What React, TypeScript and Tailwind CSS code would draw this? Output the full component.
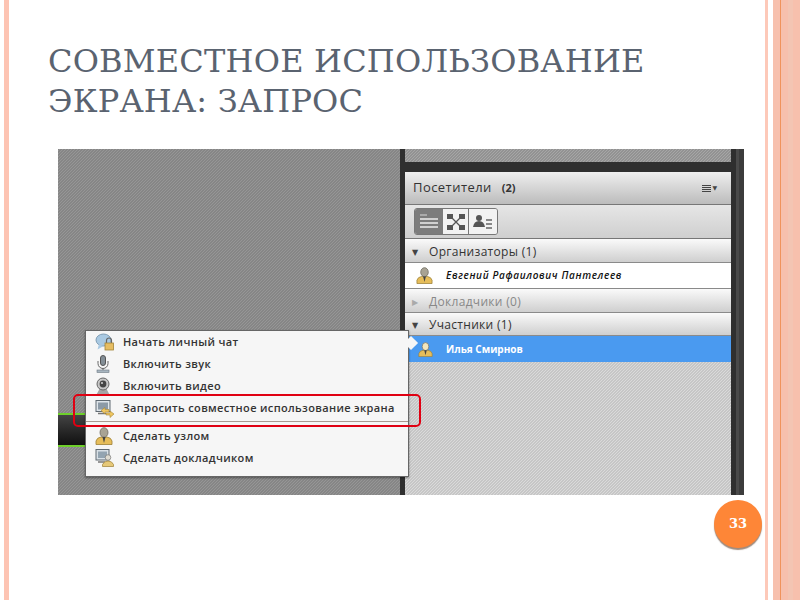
import { ReactNode } from "react";

const hatchDark =
  "bg-[repeating-linear-gradient(135deg,#868686_0px,#868686_0.8px,#969696_0.8px,#969696_2.121px)]";
const hatchTop =
  "bg-[repeating-linear-gradient(135deg,#929292_0px,#929292_0.8px,#a6a6a6_0.8px,#a6a6a6_2.121px)]";
const hatchLight =
  "bg-[repeating-linear-gradient(135deg,#c6c6c6_0px,#c6c6c6_0.8px,#dadada_0.8px,#dadada_2.121px)]";

function ChatIcon() {
  return (
    <svg width="20" height="18" viewBox="0 0 20 18">
      <ellipse cx="8.5" cy="7" rx="7.5" ry="6" fill="#a9c9e2" stroke="#7f9db5" />
      <path d="M4 11 L2.5 16.5 L8.5 13 Z" fill="#a9c9e2" />
      <path d="M11.5 10 V7.5 a2.5 2.5 0 0 1 5 0 V10" fill="none" stroke="#666" strokeWidth="1.2" />
      <rect x="10" y="10" width="8.5" height="7" fill="#e6bd62" stroke="#a38437" strokeWidth="0.8" />
    </svg>
  );
}

function MicIcon() {
  return (
    <svg width="16" height="18" viewBox="0 0 16 18">
      <rect x="5.5" y="0.5" width="5" height="10" rx="2.5" fill="#838e96" stroke="#555" />
      <path d="M3 6 V8.5 a5 5 0 0 0 10 0 V6" fill="none" stroke="#666" />
      <path d="M8 13.5 V15" stroke="#666" />
      <rect x="2" y="15" width="12" height="2.5" fill="#a8b6c0" stroke="#6b7780" strokeWidth="0.6" />
    </svg>
  );
}

function CamIcon() {
  return (
    <svg width="16" height="18" viewBox="0 0 16 18">
      <path d="M1.5 17.5 L5 11 H11 L14.5 17.5 Z" fill="#a5a5a5" />
      <circle cx="8" cy="7" r="6" fill="#c6c6c6" stroke="#666" />
      <circle cx="8" cy="7" r="3.4" fill="#444" />
      <circle cx="7" cy="6" r="1.1" fill="#ccc" />
    </svg>
  );
}

function ShareIcon() {
  return (
    <svg width="20" height="18" viewBox="0 0 20 18">
      <rect x="1" y="0.5" width="14" height="11" fill="#dfe5ea" stroke="#606a72" />
      <rect x="3" y="2.5" width="10" height="7" fill="#8c9aa6" />
      <path d="M3 13.5 H11" stroke="#777" strokeWidth="1.5" />
      <path d="M6 10.5 L10 7.5 V9.5 H14 V12 H10 V14 Z" fill="#efc660" stroke="#a58437" strokeWidth="0.6" />
      <path d="M19 14 L15 11 V13 H11 V15 H15 V17.5 Z" fill="#efc660" stroke="#a58437" strokeWidth="0.6" />
    </svg>
  );
}

function HostIcon({ size = 18, head = "#a8a394" }: { size?: number; head?: string }) {
  return (
    <svg width={size} height={size} viewBox="0 0 18 18">
      <path d="M1 17.5 V14 Q2 10.5 6 10 H12 Q16 10.5 17 14 V17.5 Z" fill="#e6bd5a" stroke="#9c7f36" strokeWidth="0.8" />
      <ellipse cx="9" cy="5.5" rx="4" ry="4.8" fill={head} stroke="#6d6a60" strokeWidth="0.8" />
      <path d="M7.5 10 L9 16 L10.5 10 Z" fill="#444" />
    </svg>
  );
}

function PresenterIcon() {
  return (
    <svg width="20" height="18" viewBox="0 0 20 18">
      <rect x="1" y="0.5" width="13" height="10.5" fill="#d8e0e6" stroke="#606a72" />
      <rect x="3" y="2.5" width="9" height="6.5" fill="#93a4b1" />
      <path d="M3 13 H10" stroke="#777" strokeWidth="1.5" />
      <circle cx="13" cy="8.5" r="2.8" fill="#dedbd0" stroke="#777" strokeWidth="0.7" />
      <path d="M7.5 17.5 V15.5 Q9 12 13 12 Q17 12 18.5 15.5 V17.5 Z" fill="#e6c878" stroke="#9c7f36" strokeWidth="0.7" />
    </svg>
  );
}

function MenuRow({ icon, children, height = "h-[22px]" }: { icon: ReactNode; children: ReactNode; height?: string }) {
  return (
    <div className={`flex items-center ${height}`}>
      <div className="flex w-[37px] shrink-0 justify-start pl-[9px]">{icon}</div>
      <span className="whitespace-nowrap text-[11px] font-semibold tracking-[0.35px] text-[#333]">{children}</span>
    </div>
  );
}

function GroupHeader({ label, open = true, muted = false, height }: { label: string; open?: boolean; muted?: boolean; height: string }) {
  return (
    <div className={`flex items-center border-b border-[#8a8a8a] bg-gradient-to-b from-[#fafafa] to-[#cfcfcf] pl-[7px] pt-[2px] ${height}`}>
      <span className={`w-[17px] text-[8px] ${muted ? "text-[#aaa]" : "text-[#444]"}`}>{open ? "▼" : "▶"}</span>
      <span className={`text-[12px] tracking-[0.3px] ${muted ? "text-[#888]" : "text-[#333]"}`}>{label}</span>
    </div>
  );
}

function Visitors() {
  return (
    <div className="flex w-[326px] flex-col">
      <div className="flex h-[33px] items-center justify-between border-b border-[#777] bg-gradient-to-b from-[#efefef] to-[#bcbcbc] pl-[8px] pr-[14px]">
        <div className="flex items-center gap-[10px] text-[#333]">
          <span className="text-[13px] tracking-[0.45px]">Посетители</span>
          <span className="text-[11px] font-bold">(2)</span>
        </div>
        <div className="flex items-center gap-[1px]">
          <div className="flex w-[9px] flex-col gap-[1px]">
            <div className="h-px bg-[#444]" />
            <div className="h-px bg-[#444]" />
            <div className="h-px bg-[#444]" />
            <div className="h-px bg-[#444]" />
          </div>
          <span className="text-[6px] text-[#444]">▼</span>
        </div>
      </div>
      <div className="flex h-[34px] items-center border-b border-[#777] bg-gradient-to-b from-[#e6e6e6] to-[#cfcfcf] pl-[9px]">
        <div className="flex h-[27px] overflow-hidden rounded-[3px] border border-[#777]">
          <div className="flex w-[28px] items-center justify-center bg-[#7c7c7c]">
            <svg width="20" height="18" viewBox="0 0 20 18">
              <path d="M1 2 H8" stroke="#aaa" strokeWidth="2" />
              <path d="M1 6 H19 M1 10 H19 M1 14 H19" stroke="#d0d0d0" strokeWidth="2" />
            </svg>
          </div>
          <div className="flex w-[26px] items-center justify-center border-r border-[#777] bg-[#f2f2f2]">
            <svg width="18" height="16" viewBox="0 0 18 16">
              <path d="M4 3 L14 13 M14 3 L4 13" stroke="#555" strokeWidth="1.3" />
              <rect x="0" y="0" width="6" height="5" fill="#555" />
              <rect x="12" y="0" width="6" height="5" fill="#555" />
              <rect x="0" y="11" width="6" height="5" fill="#555" />
              <rect x="12" y="11" width="6" height="5" fill="#555" />
            </svg>
          </div>
          <div className="flex w-[28px] items-center justify-center bg-[#f2f2f2]">
            <svg width="20" height="16" viewBox="0 0 20 16">
              <circle cx="6" cy="4" r="3" fill="#555" />
              <path d="M0 13 Q1 7 6 7 Q11 7 12 13 Z" fill="#555" />
              <path d="M13 6 H19 M13 10 H19 M13 14 H19" stroke="#666" strokeWidth="1.4" />
            </svg>
          </div>
        </div>
      </div>
      <GroupHeader label="Организаторы (1)" height="h-[24px]" />
      <div className="flex h-[26px] items-center border-b border-[#8a8a8a] bg-white pl-[11px]">
        <div className="w-[30px]">
          <HostIcon size={17} />
        </div>
        <span className="text-[10px] font-semibold italic tracking-[0.65px] text-[#111]">Евгений Рафаилович Пантелеев</span>
      </div>
      <GroupHeader label="Докладчики (0)" open={false} muted height="h-[24px]" />
      <GroupHeader label="Участники (1)" height="h-[23px]" />
      <div className="flex h-[26px] items-center bg-[#4a9af0] pl-[13px]">
        <div className="w-[28px]">
          <HostIcon size={15} head="#f3e6bd" />
        </div>
        <span className="text-[10px] font-bold text-white">Илья Смирнов</span>
      </div>
      <div className={`flex-1 ${hatchLight}`} />
    </div>
  );
}

function Screenshot() {
  return (
    <div className="relative ml-[49px] flex h-[346px] w-[686px] bg-[#2f2f2f] [font-family:'Open_Sans','DejaVu_Sans',sans-serif]">
      <div className={`flex w-[342px] shrink-0 flex-col justify-end pb-[48px] ${hatchDark}`}>
        <div className="h-[34px] w-[27px] border-y-2 border-[#6ed02a] bg-gradient-to-b from-[#444] to-[#111]" />
      </div>
      <div className="ml-[5px] flex w-[326px] flex-col">
        <div className={`h-[13px] ${hatchTop}`} />
        <div className="h-[10px]" />
        <div className="flex flex-1">
          <Visitors />
        </div>
      </div>
      <div className="ml-[5px] w-[3px] bg-[#4a4a4a]" />
      <div className="w-[5px] bg-[#3c3c3c]" />

      {/* контекстное меню поверх */}
      <div className="absolute left-[27px] top-[181px] flex h-[147px] w-[324px] flex-col border border-[#666] bg-[#f6f6f6] shadow-[0_1px_2px_rgba(0,0,0,0.4)]">
        <MenuRow icon={<ChatIcon />}>Начать личный чат</MenuRow>
        <MenuRow icon={<MicIcon />}>Включить звук</MenuRow>
        <MenuRow icon={<CamIcon />}>Включить видео</MenuRow>
        <MenuRow icon={<ShareIcon />} height="h-[23px]">
          Запросить совместное использование экрана
        </MenuRow>
        <div className="my-[1px] h-[1px] bg-[#a89a90]" />
        <MenuRow icon={<HostIcon />} height="h-[26px]">
          Сделать узлом
        </MenuRow>
        <MenuRow icon={<PresenterIcon />} height="h-[18px]">
          Сделать докладчиком
        </MenuRow>
        <div className="absolute left-[320px] top-[7px] h-[10px] w-[10px] rotate-45 bg-[#f6f6f6]" />
      </div>
      <div className="absolute left-[15px] top-[245px] h-[33px] w-[348px] rounded-[5px] border-2 border-[#e00012]" />
    </div>
  );
}

export default function App() {
  return (
    <div className="relative flex h-[600px] w-[800px] overflow-hidden bg-white">
      <div className="ml-[4px] w-[5px] shrink-0 bg-[#fdc4b3]" />
      <div className="flex flex-1 flex-col">
        <h1 className="ml-[39px] mt-[41px] h-[108px] whitespace-nowrap text-[32px] font-normal leading-[40px] tracking-[0.2px] text-[#5a6370] [font-family:'DejaVu_Serif',serif]">
          СОВМЕСТНОЕ ИСПОЛЬЗОВАНИЕ
          <br />
          ЭКРАНА: ЗАПРОС
        </h1>
        <Screenshot />
      </div>
      <div className="w-[3px] shrink-0 bg-[#fdc9b9]" />
      <div className="ml-[5px] flex w-[27px] shrink-0">
        <div className="w-[7px] bg-[#f7c0ad]" />
        <div className="w-px bg-[#f0935c]" />
        <div className="w-[7px] bg-[#f7c0ad]" />
        <div className="w-[5px] bg-[#f3c5b3]" />
        <div className="w-[7px] bg-[#f7c0ad]" />
      </div>
      <div className="absolute left-[714px] top-[500px] flex h-[48px] w-[48px] items-center justify-center rounded-full bg-[#fe8637] shadow-[0_2px_1px_rgba(120,90,70,0.7)]">
        <span className="text-[13px] font-bold text-white [font-family:'DejaVu_Serif',serif]">33</span>
      </div>
    </div>
  );
}
